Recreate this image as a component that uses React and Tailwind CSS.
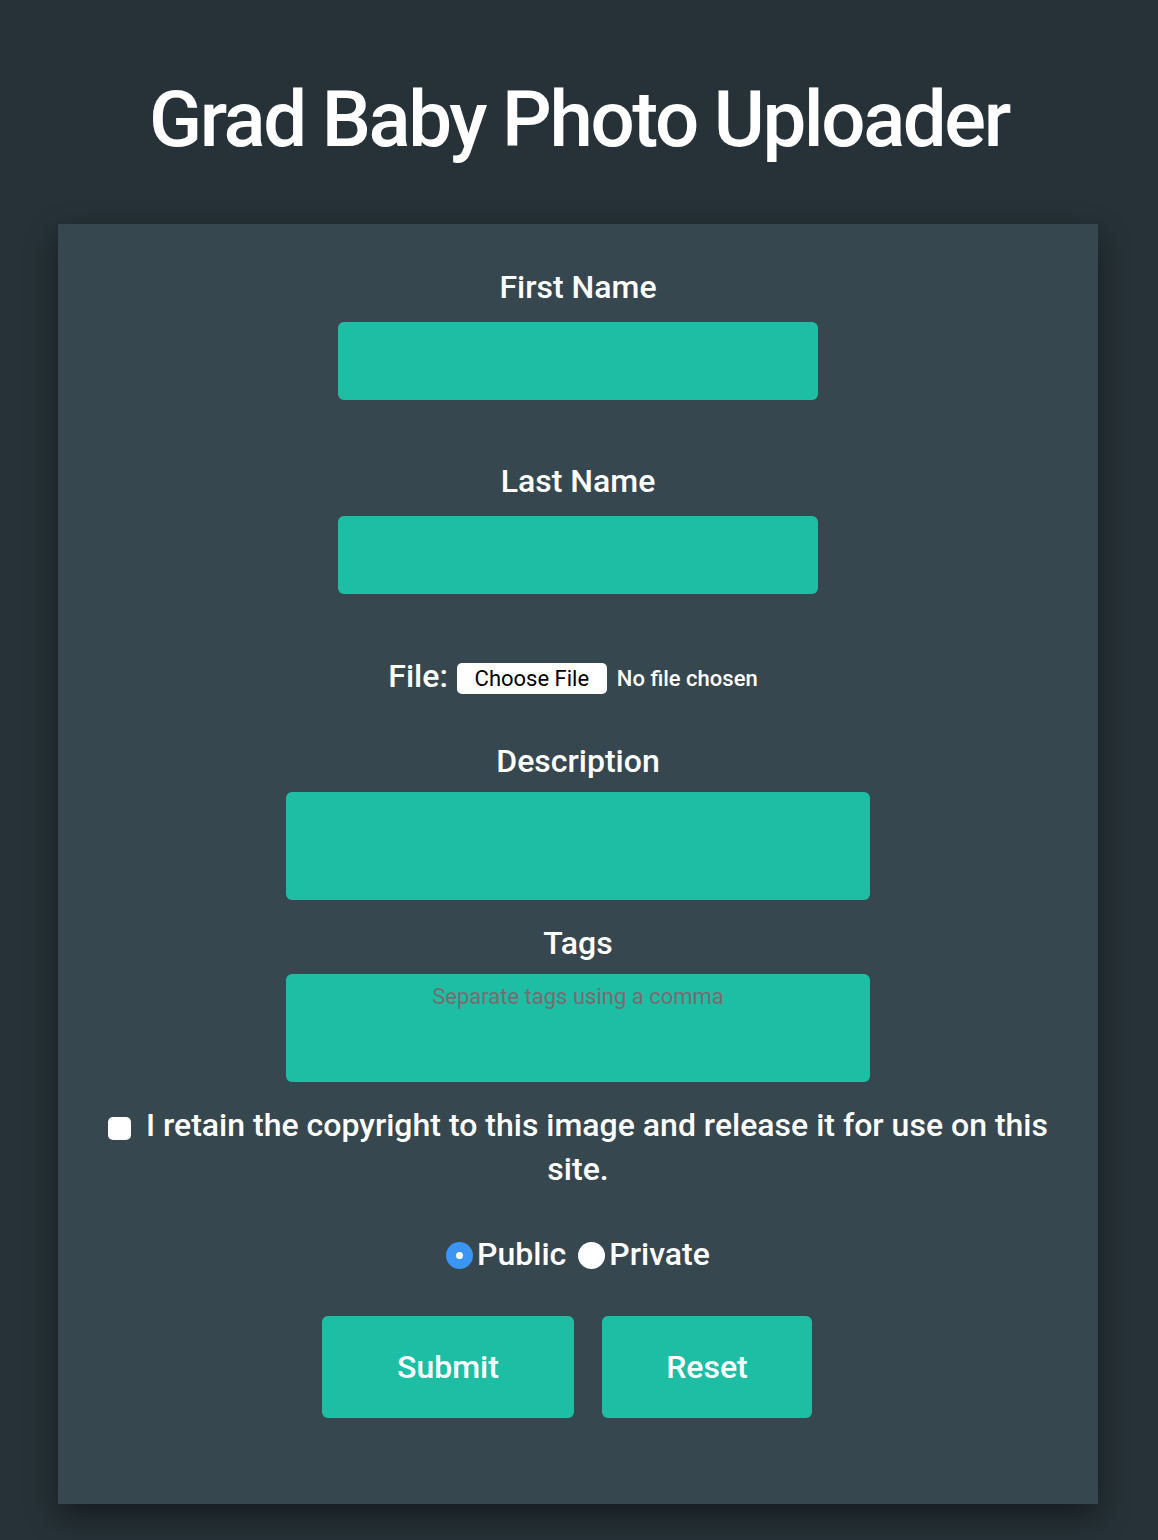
export default function App() {
    const field =
        "block bg-[#1ebea5] rounded-md outline-none border-0 text-white";

    return (
        <div className="min-h-[1540px] bg-[#263238] font-['Roboto',sans-serif] text-white">
            <header className="h-[224px] pt-[72px] text-center">
                <h1 className="text-[78px] leading-[96px] font-medium tracking-[-2.4px]">
                    Grad Baby Photo Uploader
                </h1>
            </header>

            <form className="ml-[58px] w-[1040px] bg-[#37474f] pt-[44px] pb-[86px] shadow-[0_12px_30px_rgba(0,0,0,0.45)] flex flex-col items-center">
                <label className="text-[32px] leading-[38px] font-medium">
                    First Name
                </label>
                <input className={`${field} mt-4 w-[480px] h-[78px]`} />

                <label className="mt-[62px] text-[32px] leading-[38px] font-medium">
                    Last Name
                </label>
                <input className={`${field} mt-4 w-[480px] h-[78px]`} />

                <div className="mt-[63px] mr-[10px] flex items-center h-[38px]">
                    <span className="text-[32px] leading-[38px] font-medium">File:</span>
                    <span className="ml-[9px] h-[31px] w-[150px] bg-white rounded-[5px] text-black text-[22px] flex items-center justify-center mt-[4px]">
                        Choose File
                    </span>
                    <span className="ml-[10px] text-[22px] font-medium mt-[4px]">No file chosen</span>
                </div>

                <label className="mt-[47px] text-[32px] leading-[38px] font-medium">
                    Description
                </label>
                <textarea className={`${field} mt-3 w-[584px] h-[108px] resize-none`} />

                <label className="mt-[24px] text-[32px] leading-[38px] font-medium">
                    Tags
                </label>
                <textarea
                    placeholder="Separate tags using a comma"
                    className={`${field} mt-3 w-[584px] h-[108px] resize-none text-center text-[22px] pt-[6px] placeholder:text-[#7b6b70]`}
                />

                <p className="mt-[21px] px-[48px] text-center text-[32px] leading-[44px] font-medium">
                    <span className="inline-block align-[-4px] mr-[15px] w-[23px] h-[23px] bg-white rounded-[5px]" />
                    I retain the copyright to this image and release it for use on this site.
                </p>

                <div className="mt-[44px] flex items-center h-[38px] text-[32px] font-medium">
                    <span className="w-[27px] h-[27px] rounded-full bg-[#3b95f5] flex items-center justify-center mt-[2px]">
                        <span className="w-[7px] h-[7px] rounded-full bg-white" />
                    </span>
                    <span className="ml-[4px]">Public</span>
                    <span className="ml-[12px] w-[27px] h-[27px] rounded-full bg-white mt-[2px]" />
                    <span className="ml-[4px]">Private</span>
                </div>

                <div className="mt-[43px] mr-[22px] flex gap-[28px]">
                    <button
                        type="button"
                        className="w-[252px] h-[102px] rounded-md bg-[#1ebea5] text-[32px] font-medium"
                    >
                        Submit
                    </button>
                    <button
                        type="button"
                        className="w-[210px] h-[102px] rounded-md bg-[#1ebea5] text-[32px] font-medium"
                    >
                        Reset
                    </button>
                </div>
            </form>
        </div>
    );
}
